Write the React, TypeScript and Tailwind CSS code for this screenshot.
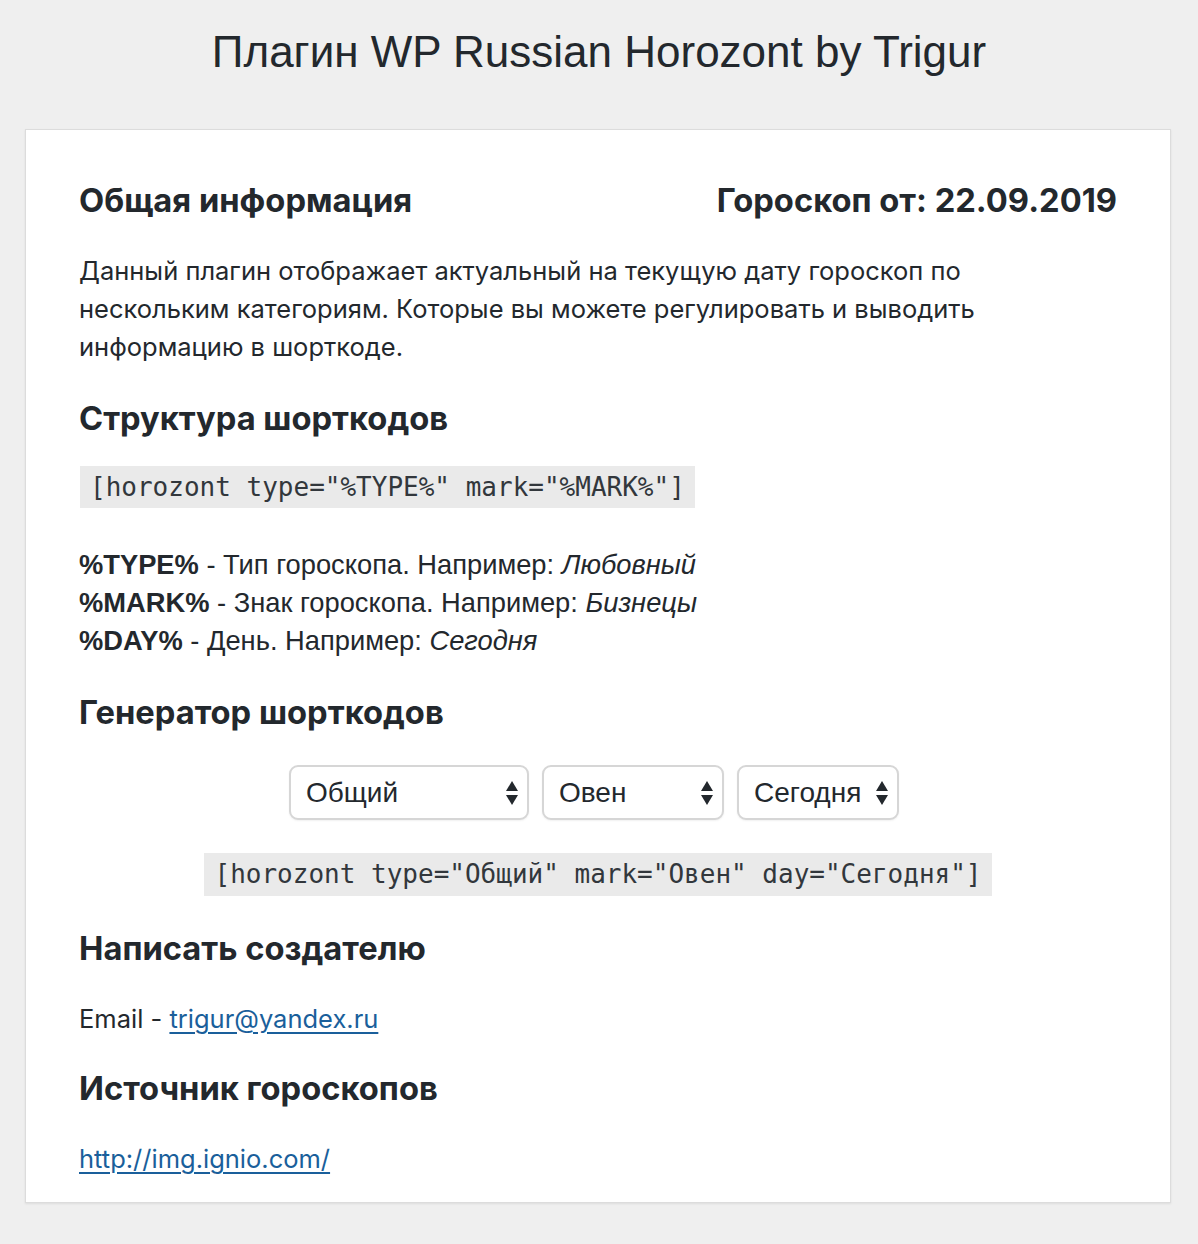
import React from "react";

const body = { fontFamily: "Inter, 'Noto Sans', sans-serif" };
const helv = { fontFamily: "'Liberation Sans', Arial, sans-serif" };
const mono = { fontFamily: "'DejaVu Sans Mono', monospace" };

const Arrows: React.FC = () => (
  <svg width="14" height="26" viewBox="0 0 14 26" className="shrink-0">
    <path d="M7 1 L13 11 L1 11 Z" fill="#23282d" />
    <path d="M1 15 L13 15 L7 25 Z" fill="#23282d" />
  </svg>
);

const FakeSelect: React.FC<{ label: string; width: string }> = ({ label, width }) => (
  <div
    className={`${width} h-[55px] flex items-center justify-between pl-[15px] pr-[8px] bg-white border-2 border-[#d6d6d6] rounded-[9px] text-[28px] text-[#23282d] shadow-[0_1px_2px_rgba(0,0,0,0.06)]`}
    style={helv}
  >
    <span>{label}</span>
    <Arrows />
  </div>
);

const Heading: React.FC<{ children: React.ReactNode; className?: string }> = ({ children, className }) => (
  <h2 className={`text-[32.7px] leading-[40px] font-bold text-[#23282d] ${className ?? ""}`} style={body}>
    {children}
  </h2>
);

const App: React.FC = () => {
  return (
    <div className="min-h-[1244px] bg-[#efefef] pt-[24px] pb-[41px]">
      <h1 className="text-center text-[44px] leading-[56px] text-[#23282d] mb-[49px]" style={helv}>
        Плагин WP Russian Horozont by Trigur
      </h1>

      <div
        className="ml-[25px] mr-[27px] bg-white border border-[#dcdcdc] shadow-[0_1px_2px_rgba(0,0,0,0.08)] px-[53px] pt-[50px] pb-[24px] text-[#23282d]"
        style={body}
      >
        <div className="flex justify-between items-center">
          <Heading>Общая информация</Heading>
          <Heading>Гороскоп от: 22.09.2019</Heading>
        </div>

        <p className="mt-[32px] text-[25.5px] leading-[38px] pr-[40px]">
          Данный плагин отображает актуальный на текущую дату гороскоп по нескольким категориям. Которые вы можете
          регулировать и выводить информацию в шорткоде.
        </p>

        <Heading className="mt-[32px]">Структура шорткодов</Heading>

        <div className="mt-[28px]">
          <code
            className="inline-block h-[42px] leading-[42px] px-[10px] ml-[1px] bg-[#eaeaea] text-[26px] text-[#32373c]"
            style={mono}
          >
            [horozont type="%TYPE%" mark="%MARK%"]
          </code>
        </div>

        <div className="mt-[38px] text-[27.3px] leading-[38px]" style={helv}>
          <div>
            <b>%TYPE%</b> - Тип гороскопа. Например: <i>Любовный</i>
          </div>
          <div>
            <b>%MARK%</b> - Знак гороскопа. Например: <i>Бизнецы</i>
          </div>
          <div>
            <b>%DAY%</b> - День. Например: <i>Сегодня</i>
          </div>
        </div>

        <Heading className="mt-[32px]">Генератор шорткодов</Heading>

        <div className="mt-[33px] flex justify-center gap-[13px] pr-[8px]">
          <FakeSelect label="Общий" width="w-[240px]" />
          <FakeSelect label="Овен" width="w-[182px]" />
          <FakeSelect label="Сегодня" width="w-[162px]" />
        </div>

        <div className="mt-[33px] flex justify-center">
          <code
            className="inline-block h-[43px] leading-[43px] px-[10px] bg-[#eaeaea] text-[26px] text-[#32373c]"
            style={mono}
          >
            [horozont type="Общий" mark="Овен" day="Сегодня"]
          </code>
        </div>

        <Heading className="mt-[32px]">Написать создателю</Heading>

        <p className="mt-[32px] text-[25.5px] leading-[38px]">
          Email -{" "}
          <a href="#" className="text-[#1a5f9b] underline underline-offset-[4px]">
            trigur@yandex.ru
          </a>
        </p>

        <Heading className="mt-[30px]">Источник гороскопов</Heading>

        <p className="mt-[32px] text-[25.5px] leading-[38px]">
          <a href="#" className="text-[#1a5f9b] underline underline-offset-[4px]">
            http://img.ignio.com/
          </a>
        </p>
      </div>
    </div>
  );
};

export default App;
